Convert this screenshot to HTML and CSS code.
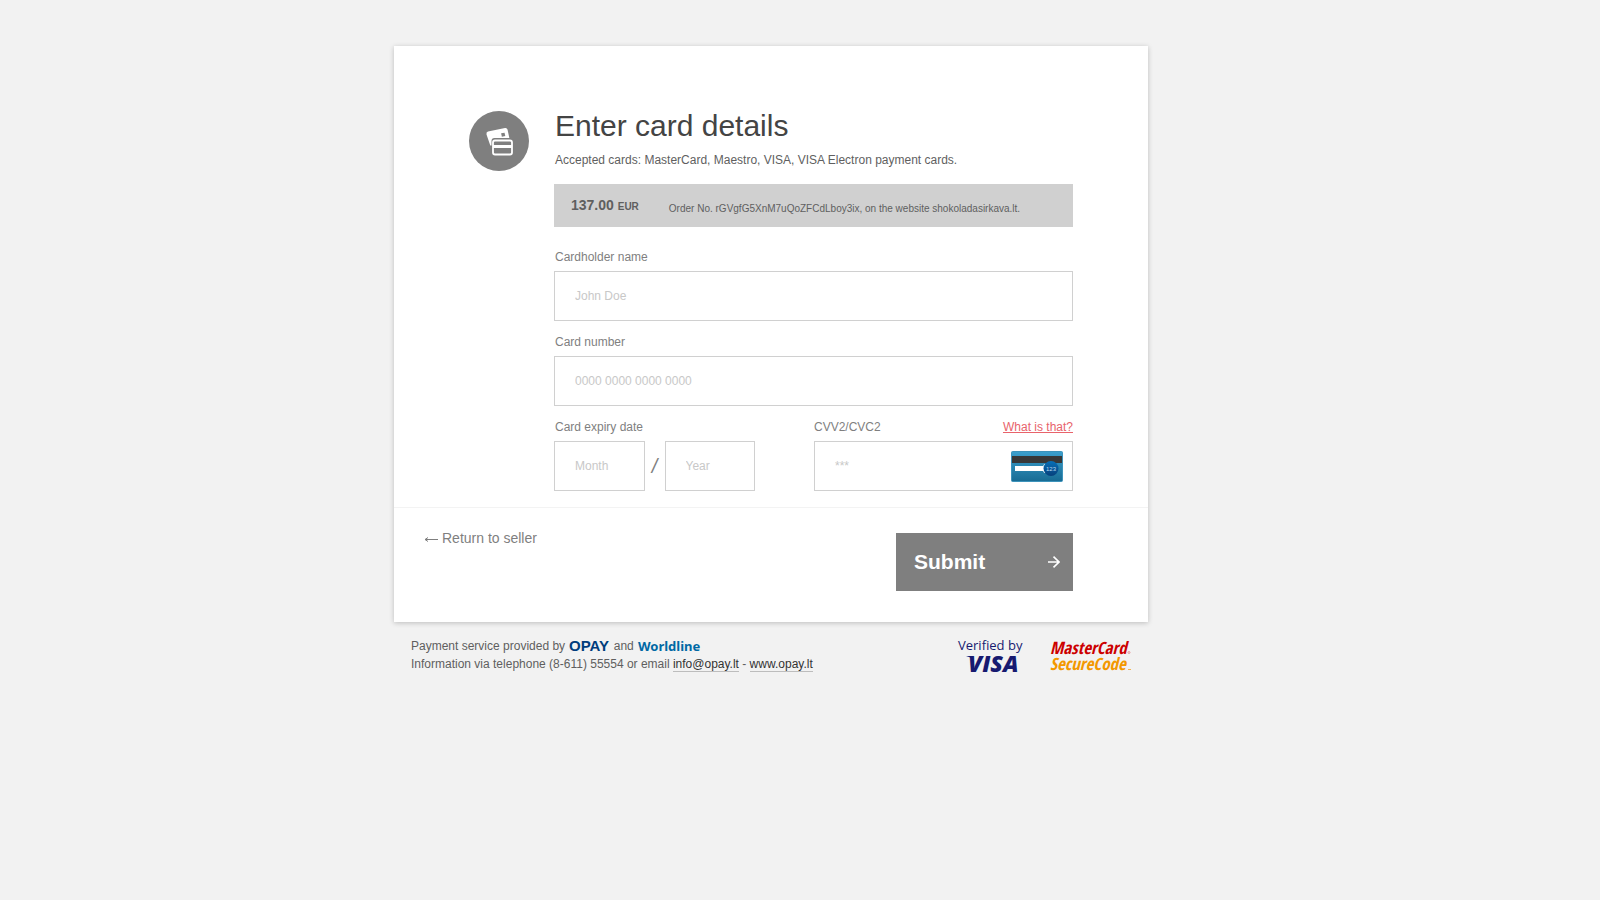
FILE: index.html
```
<!DOCTYPE html>
<html lang="en">
<head>
<meta charset="utf-8">
<meta name="viewport" content="width=device-width, initial-scale=1">
<title>Enter card details</title>
<link rel="stylesheet" href="styles.css">
</head>
<body>
<div class="page">
  <main class="panel">
    <form class="form">
      <div class="details">
        <svg class="badge" viewBox="0 0 60 60" aria-hidden="true">
          <circle cx="30" cy="30" r="30" fill="#7f7f7f"/>
          <path d="M19 20.500 36 17Q38 16.700 38.500 18.500L41 30H25Q23 30 23 32V34.500H21.300L17.500 23.500Q17 21 19 20.500Z" fill="#fff"/>
          <rect x="32.500" y="22" width="3.500" height="3.500" transform="rotate(-12 34 24)" fill="#7f7f7f"/>
          <rect x="22.500" y="27" width="22" height="18" rx="3" fill="#7f7f7f"/>
          <rect x="24" y="29.500" width="19" height="14" rx="2" fill="none" stroke="#fff" stroke-width="1.800"/>
          <rect x="24" y="34" width="19" height="3" fill="#fff"/>
        </svg>
        <div class="content">
          <h1 class="title">Enter card details</h1>
          <p class="lead">Accepted cards: MasterCard, Maestro, VISA, VISA Electron payment cards.</p>
          <div class="order">
            <strong class="amount">137.00 <span class="currency">EUR</span></strong>
            <span class="order-text">Order No. rGVgfG5XnM7uQoZFCdLboy3ix, on the website shokoladasirkava.lt.</span>
          </div>
          <div class="field">
            <label class="label" for="holder">Cardholder name</label>
            <input class="input" id="holder" type="text" placeholder="John Doe">
          </div>
          <div class="field">
            <label class="label" for="number">Card number</label>
            <input class="input" id="number" type="text" placeholder="0000 0000 0000 0000">
          </div>
          <div class="row">
            <div class="field">
              <label class="label" for="month">Card expiry date</label>
              <div class="expiry">
                <input class="input" id="month" type="text" placeholder="Month">
                <span class="slash">/</span>
                <input class="input" id="year" type="text" placeholder="Year" aria-label="Year">
              </div>
            </div>
            <div class="field">
              <div class="label-row">
                <label class="label" for="cvv">CVV2/CVC2</label>
                <a class="help" href="#">What is that?</a>
              </div>
              <div class="cvv">
                <input class="input" id="cvv" type="text" placeholder="***">
                <svg class="cvv-card" viewBox="0 0 52 31" aria-hidden="true">
                  <defs>
                    <linearGradient id="blue" x2="0" y2="1"><stop stop-color="#3ca0ce"/><stop offset="1" stop-color="#176b93"/></linearGradient>
                    <linearGradient id="disc" x2="0" y2="1"><stop stop-color="#0870b8"/><stop offset="1" stop-color="#06407b"/></linearGradient>
                  </defs>
                  <rect x=".5" y=".5" width="51" height="30" rx="1" fill="url(#blue)" stroke="#3d93bb"/>
                  <rect x="1" y="5" width="50" height="7" fill="#383838"/>
                  <rect x="4" y="15" width="31" height="5" fill="#fff"/>
                  <path d="M34 13.500Q31.500 17.500 34 21.500" fill="none" stroke="#fff" stroke-width="2"/>
                  <circle cx="40" cy="17.500" r="7.500" fill="url(#disc)"/>
                  <text class="cvv-digits" x="40" y="20" text-anchor="middle">123</text>
                </svg>
              </div>
            </div>
          </div>
        </div>
      </div>
      <div class="actions">
        <a class="back" href="#"><svg class="back-arrow" viewBox="0 0 14 7" aria-hidden="true"><path d="M14 4.500H1M4 2.500 1 4.500 4 6.500" fill="none" stroke="#7f7f7f"/></svg>Return to seller</a>
        <button class="submit" type="button">Submit
          <svg class="submit-arrow" viewBox="0 0 12 12" aria-hidden="true"><path d="M0 6H11M5.500 .7 11 6 5.500 11.300" fill="none" stroke="#fff" stroke-width="1.600"/></svg>
        </button>
      </div>
    </form>
  </main>
  <footer class="footer">
    <div class="info">
      <p class="line">Payment service provided by
        <svg class="opay" viewBox="0 0 41 12" role="img" aria-label="OPAY"><text class="opay-text" x="0" y="11">OPAY</text></svg>
        and
        <svg class="worldline" viewBox="0 0 63 12" role="img" aria-label="Worldline"><text class="worldline-text" x="0" y="11">Worldline</text></svg>
      </p>
      <p class="line">Information via telephone (8-611) 55554 or email <a class="link" href="#">info@opay.lt</a> - <a class="link" href="#">www.opay.lt</a></p>
    </div>
    <div class="marks">
      <svg class="visa" viewBox="0 0 68 36" role="img" aria-label="Verified by VISA">
        <text class="verified" x="0" y="12">Verified by</text>
        <path d="M8 18H15V21.500Q12 18.800 8 18Z" fill="#171a70"/>
        <text class="visa-text" x="10" y="34">VISA</text>
      </svg>
      <svg class="mastercard" viewBox="0 0 80 36" role="img" aria-label="MasterCard SecureCode">
        <text class="mc-text mc-red" x="-1" y="16">MasterCard</text>
        <circle cx="78" cy="14.500" r="1" fill="none" stroke="#d66" stroke-width=".6"/>
        <text class="mc-text mc-orange" x="-1" y="32">SecureCode</text>
        <path d="M77 31.500H80" stroke="#f2b452"/>
      </svg>
    </div>
  </footer>
</div>
</body>
</html>
```
FILE: styles.css
```
* { box-sizing: border-box; }

body {
  margin: 0;
  background: #f2f2f2;
  color: #5f5f5f;
  font: 12px/18px "Liberation Sans", Arial, sans-serif;
}

.page {
  max-width: 812px;
  margin: 0 auto;
  padding: 46px 58px 24px 0;
}

.panel {
  background: #fff;
  box-shadow: 0 1px 5px rgba(0, 0, 0, .22);
}

.details {
  display: flex;
  gap: 25px;
  align-items: flex-start;
  padding: 65px 75px 16px;
}

.badge { flex: none; width: 60px; height: 60px; }

.content { flex: 1; min-width: 0; }

.title {
  margin: 0;
  color: #444;
  font-size: 30px;
  font-weight: 400;
  line-height: 30px;
}

.lead { margin: 10px 0 15px; }

.title, .lead, .label { padding-left: 1px; }

.order {
  display: flex;
  align-items: flex-end;
  gap: 30px;
  margin-bottom: 21px;
  padding: 12px 17px 11px;
  background: #d0d0d0;
}

.amount { font-size: 14px; white-space: nowrap; }
.currency { font-size: 10px; }
.order-text { font-size: 10px; line-height: 14px; }

.field { min-width: 0; margin-bottom: 12px; }
.row .field { margin-bottom: 0; }

.label {
  display: block;
  margin-bottom: 5px;
  color: #7f7f7f;
}

.input {
  display: block;
  width: 100%;
  min-width: 0;
  height: 50px;
  padding: 0 20px;
  border: 1px solid #d0d0d0;
  border-radius: 0;
  background: #fff;
  color: #5f5f5f;
  font: inherit;
}

.input::placeholder { color: #c8c8c8; opacity: 1; }

.row {
  display: grid;
  grid-template-columns: 201px 1fr;
  gap: 59px;
}

.expiry {
  display: grid;
  grid-template-columns: 1fr 20px 1fr;
  align-items: center;
}

.slash { color: #7f7f7f; font-size: 20px; font-style: italic; text-align: center; }

.label-row { display: flex; justify-content: space-between; }
.label-row .label { padding-left: 0; }
.help { color: #e8636b; }

.cvv { position: relative; }
.cvv-card { position: absolute; top: 10px; right: 10px; width: 52px; height: 31px; }
.cvv-digits { fill: #b9d9ef; font-size: 6px; }

.actions {
  display: flex;
  justify-content: space-between;
  align-items: flex-start;
  padding: 25px 75px 31px 30px;
  border-top: 1px solid #f3f3f3;
}

.back {
  display: flex;
  align-items: center;
  gap: 4px;
  margin-top: -4px;
  color: #7f7f7f;
  font-size: 14px;
  text-decoration: none;
}

.back-arrow { width: 14px; height: 7px; }

.submit {
  display: flex;
  justify-content: space-between;
  align-items: center;
  width: 177px;
  height: 58px;
  padding: 0 13px 0 18px;
  border: 0;
  background: #7f7f7f;
  color: #fff;
  font: bold 21px/24px "Liberation Sans", Arial, sans-serif;
}

.submit-arrow { width: 12px; height: 12px; }

.footer {
  display: flex;
  justify-content: space-between;
  padding: 15px 17px 0;
}

.footer svg { overflow: visible; }

.line { margin: 0; }

.link {
  border-bottom: 1px solid #bdbdbd;
  color: #333;
  text-decoration: none;
}

.opay { width: 41px; height: 12px; margin-left: 1px; vertical-align: -2px; }
.opay-text { fill: #003d7c; font: bold 15px "Liberation Sans", Arial, sans-serif; }
.worldline { width: 63px; height: 12px; margin-left: 1px; vertical-align: -2px; }
.worldline-text { fill: #0068a4; font: bold 13px "Noto Sans", sans-serif; }

.marks { display: flex; gap: 25px; padding-top: 1px; }
.visa { width: 68px; height: 36px; }
.mastercard { width: 80px; height: 36px; }
.verified { fill: #171a70; font: 13px "Open Sans", sans-serif; }
.visa-text { fill: #171a70; font: italic 800 23px "Open Sans", sans-serif; }
.mc-text { font: italic bold 17px "Liberation Sans Narrow", "Open Sans Condensed", "Noto Sans", sans-serif; }
.mc-red { fill: #c00; }
.mc-orange { fill: #f39800; }
```
